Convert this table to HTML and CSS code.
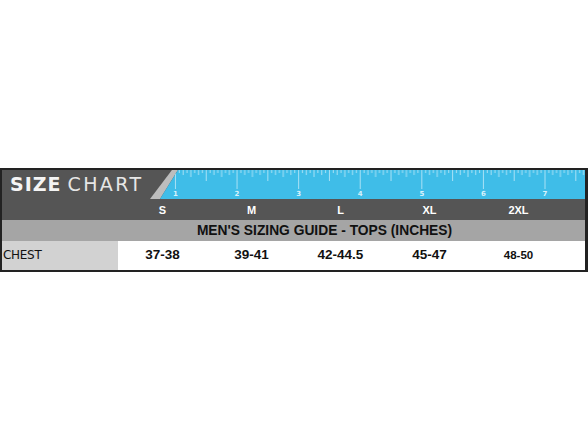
FILE: index.html
```html
<!DOCTYPE html>
<html>
<head>
<meta charset="utf-8">
<link rel="stylesheet" href="styles.css">
</head>
<body>
<div class="chart">
  <div class="head">
    <div class="title"><span class="t-bold">SIZE</span><span class="t-light">CHART</span></div>
    <svg class="ruler" width="438" height="29" viewBox="0 0 438 29">
      <defs>
        <pattern id="ticks" x="27" y="0" width="61.7" height="29" patternUnits="userSpaceOnUse">
          <g stroke="#a9e1f5" stroke-width="1">
            <line x1="0.5" y1="0" x2="0.5" y2="19"/>
            <line x1="4.36" y1="0" x2="4.36" y2="3"/>
            <line x1="8.21" y1="0" x2="8.21" y2="5"/>
            <line x1="12.07" y1="0" x2="12.07" y2="3"/>
            <line x1="15.93" y1="0" x2="15.93" y2="7"/>
            <line x1="19.78" y1="0" x2="19.78" y2="3"/>
            <line x1="23.64" y1="0" x2="23.64" y2="5"/>
            <line x1="27.5" y1="0" x2="27.5" y2="3"/>
            <line x1="31.35" y1="0" x2="31.35" y2="11"/>
            <line x1="35.21" y1="0" x2="35.21" y2="3"/>
            <line x1="39.07" y1="0" x2="39.07" y2="5"/>
            <line x1="42.92" y1="0" x2="42.92" y2="3"/>
            <line x1="46.78" y1="0" x2="46.78" y2="7"/>
            <line x1="50.64" y1="0" x2="50.64" y2="3"/>
            <line x1="54.49" y1="0" x2="54.49" y2="5"/>
            <line x1="58.35" y1="0" x2="58.35" y2="3"/>
          </g>
        </pattern>
        <clipPath id="blueclip">
          <polygon points="30,0 438,0 438,29 12,29"/>
        </clipPath>
      </defs>
      <polygon points="24,0 30,0 12,29 2,29" fill="#bdbdbd"/>
      <polygon points="30,0 438,0 438,29 12,29" fill="#3fbde8"/>
      <rect x="0" y="0" width="438" height="29" fill="url(#ticks)" clip-path="url(#blueclip)"/>
      <g class="nums" fill="#d9f2fb" text-anchor="middle">
        <text x="27.5" y="26">1</text>
        <text x="89.2" y="26">2</text>
        <text x="150.9" y="26">3</text>
        <text x="212.6" y="26">4</text>
        <text x="274.3" y="26">5</text>
        <text x="336" y="26">6</text>
        <text x="397.7" y="26">7</text>
      </g>
    </svg>
  </div>
  <div class="row labels">
    <div class="cell first"></div>
    <div class="cell">S</div>
    <div class="cell">M</div>
    <div class="cell">L</div>
    <div class="cell">XL</div>
    <div class="cell">2XL</div>
    <div class="cell"></div>
  </div>
  <div class="guide">MEN'S SIZING GUIDE - TOPS (INCHES)</div>
  <div class="row data">
    <div class="cell first">CHEST</div>
    <div class="cell">37-38</div>
    <div class="cell">39-41</div>
    <div class="cell">42-44.5</div>
    <div class="cell">45-47</div>
    <div class="cell small">48-50</div>
    <div class="cell"></div>
  </div>
</div>
</body>
</html>
```
FILE: styles.css
```css
html, body {
  margin: 0;
  padding: 0;
  background: #ffffff;
}

.chart {
  margin-top: 168px;
  width: 588px;
  box-sizing: border-box;
  border: 2px solid #222222;
  border-right-width: 3px;
  background: #ffffff;
  font-family: "Liberation Sans", Arial, sans-serif;
}

.head {
  display: flex;
  height: 29px;
  background: #555555;
}

.title {
  width: 146px;
  display: flex;
  align-items: center;
  padding-left: 8px;
  padding-bottom: 1px;
  box-sizing: border-box;
  font-family: "DejaVu Sans", sans-serif;
  font-size: 19px;
  line-height: 1;
  color: #f4f4f4;
  white-space: nowrap;
}

.t-bold {
  font-weight: 700;
  letter-spacing: 1px;
  margin-right: 6px;
}

.t-light {
  font-weight: 400;
  letter-spacing: 2.4px;
  color: #e6e6e6;
}

.ruler {
  display: block;
}

.nums {
  font-family: "DejaVu Sans", sans-serif;
  font-size: 7px;
  font-weight: bold;
}

.row {
  display: grid;
  grid-template-columns: 116px repeat(5, 89px) 1fr;
}

.labels {
  height: 21px;
  background: #555555;
  color: #ffffff;
  font-size: 11px;
  font-weight: bold;
}

.labels .cell {
  display: flex;
  align-items: center;
  justify-content: center;
  padding-top: 1px;
}

.guide {
  height: 21px;
  background: #a5a5a5;
  color: #111111;
  font-size: 13.8px;
  font-weight: bold;
  display: flex;
  align-items: center;
  justify-content: center;
  padding-left: 62px;
}

.data {
  height: 29px;
  color: #111111;
  font-size: 13.5px;
  font-weight: bold;
}

.data .cell {
  display: flex;
  align-items: center;
  justify-content: center;
  padding-bottom: 2px;
}

.data .first {
  justify-content: flex-start;
  background: #d2d2d2;
  padding-left: 1px;
  font-weight: normal;
  font-size: 12px;
  font-family: "DejaVu Sans", sans-serif;
  letter-spacing: -0.3px;
}

.data .small {
  font-size: 11.5px;
  padding-top: 1px;
}
```
